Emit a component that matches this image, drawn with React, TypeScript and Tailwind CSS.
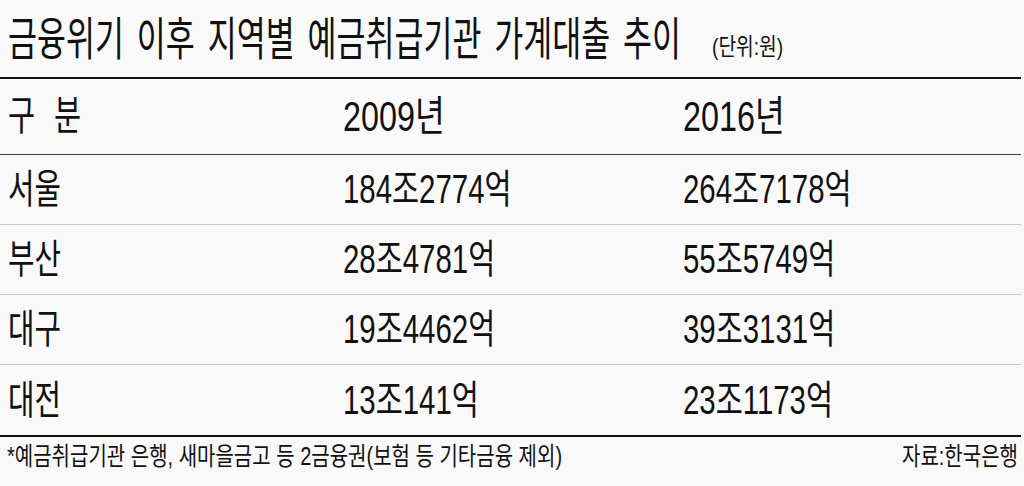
import React from "react";

const FONT = { fontFamily: '"Liberation Sans", "Noto Sans CJK KR", sans-serif' };

const rows = [
  ["서울", "184조2774억", "264조7178억"],
  ["부산", "28조4781억", "55조5749억"],
  ["대구", "19조4462억", "39조3131억"],
  ["대전", "13조141억", "23조1173억"],
];

export default function App() {
  return (
    <div
      className="w-[1024px] h-[486px] bg-[#f9f9f9] text-[#111] overflow-hidden"
      style={FONT}
    >
      <div className="w-[1021px]">
        {/* Title */}
        <div className="h-[77px] flex items-center pl-[8px] whitespace-nowrap">
          <span className="inline-block origin-left scale-x-[0.685] text-[46px] leading-none [word-spacing:6px] w-[704px]">
            금융위기 이후 지역별 예금취급기관 가계대출 추이
          </span>
          <span className="inline-block origin-left scale-x-[0.8] text-[24px] leading-none mt-[16px]">
            (단위:원)
          </span>
        </div>
        <div className="h-[2px] bg-[#111]" />
        {/* Header */}
        <div className="h-[76px] grid grid-cols-[343px_340px_1fr] items-center border-b border-[#444] whitespace-nowrap">
          <div className="pl-[8px] flex gap-[8px]">
            <span className="inline-block origin-left scale-x-[0.72] text-[41px] leading-none">구</span>
            <span className="inline-block origin-left scale-x-[0.72] text-[41px] leading-none">분</span>
          </div>
          <div>
            <span className="inline-block origin-left scale-x-[0.77] text-[42px] leading-none">2009년</span>
          </div>
          <div>
            <span className="inline-block origin-left scale-x-[0.77] text-[42px] leading-none">2016년</span>
          </div>
        </div>
        {/* Rows */}
        {rows.map((r, i) => (
          <div
            key={r[0]}
            className={
              "h-[70px] grid grid-cols-[343px_340px_1fr] items-center whitespace-nowrap " +
              (i < rows.length - 1 ? "border-b border-[#c8c8c8]" : "")
            }
          >
            <div className="pl-[8px]">
              <span className="inline-block origin-left scale-x-[0.72] text-[40px] leading-none">{r[0]}</span>
            </div>
            <div>
              <span className="inline-block origin-left scale-x-[0.735] text-[40px] leading-none">{r[1]}</span>
            </div>
            <div>
              <span className="inline-block origin-left scale-x-[0.735] text-[40px] leading-none">{r[2]}</span>
            </div>
          </div>
        ))}
        <div className="h-[2px] bg-[#111]" />
        {/* Footer */}
        <div className="flex justify-between items-start pt-[7px] whitespace-nowrap">
          <span className="inline-block origin-left scale-x-[0.8] text-[25px] leading-none ml-[7px]">
            *예금취급기관 은행, 새마을금고 등 2금융권(보험 등 기타금융 제외)
          </span>
          <span className="inline-block origin-right scale-x-[0.8] text-[25px] leading-none mr-[3px]">
            자료:한국은행
          </span>
        </div>
      </div>
    </div>
  );
}
